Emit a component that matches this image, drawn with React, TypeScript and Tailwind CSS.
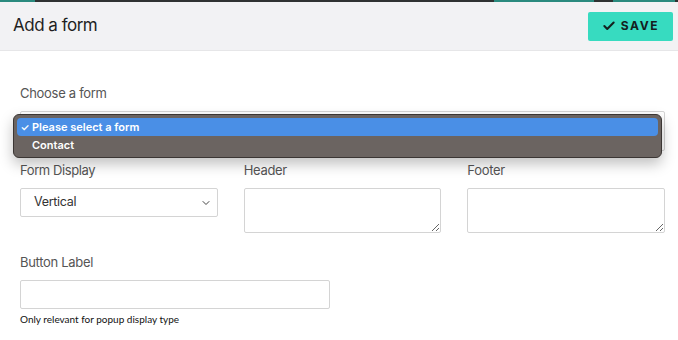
import {Check, ChevronDown} from "lucide-react";

export default function App() {
    return (
        <div className="w-[678px] h-[340px] bg-white overflow-hidden font-[Inter,sans-serif] relative">
            {/* loading strip */}
            <div className="flex h-[2px] bg-[#2f3232]">
                <div className="w-[35px] bg-[#2a8a7e]"/>
                <div className="w-[459px]"/>
                <div className="w-[100px] bg-[#2a8a7e]"/>
                <div className="w-[19px]"/>
                <div className="w-[62px] bg-[#2a8a7e]"/>
            </div>

            <div className="h-[49px] bg-[#f2f2f4] border-b border-[#e6e6e8] flex items-center justify-between pl-[13px] pr-[5px]">
                <h1 className="text-[17px] text-[#1f1f1f] tracking-[-0.5px]">Add a form</h1>
                <button className="h-[29px] w-[85px] rounded-[2px] bg-[#37dbc0] flex items-center justify-center gap-[5px] text-[12px] font-bold tracking-[1.6px] text-[#14201e]">
                    <Check size={14} strokeWidth={3.5}/>
                    SAVE
                </button>
            </div>

            <div className="px-5 pt-[32px]">
                <div className="text-[13px] leading-[20px] text-[#555] tracking-[-0.3px]">Choose a form</div>
                <div className="relative mt-2">
                    <div className="h-[40px] w-[645px] border border-[#d4d4d4] rounded-[2px] bg-white"/>
                    <div className="absolute left-[-7px] top-[3px] w-[649px] h-[44px] rounded-[6px] bg-[#6b6461] border border-[#3b3634] p-[3px] shadow-[0_6px_14px_rgba(0,0,0,0.25)]">
                        <div className="h-[18px] rounded-[4px] bg-[#4a8fe6] flex items-center text-[11px] font-semibold text-white">
                            <span className="w-[14px] text-center text-[10px] ml-[1px]">✓</span>
                            Please select a form
                        </div>
                        <div className="h-[18px] flex items-center pl-[15px] text-[11px] font-semibold text-white">
                            Contact
                        </div>
                    </div>
                </div>

                <div className="grid grid-cols-3 gap-x-[26px] w-[645px] mt-[9px]">
                    <div>
                        <div className="text-[13px] leading-[20px] text-[#555] tracking-[-0.4px]">Form Display</div>
                        <div className="mt-2 h-[29px] border border-[#d4d4d4] rounded-[2px] flex items-center justify-between pl-[13px] pr-[5px] text-[12.5px] tracking-[-0.3px] text-[#333]">
                            Vertical
                            <ChevronDown size={12} strokeWidth={2} className="text-[#444]"/>
                        </div>
                    </div>
                    <div>
                        <div className="text-[13px] leading-[20px] text-[#555] tracking-[-0.3px]">Header</div>
                        <textarea className="mt-2 block w-full h-[45px] border border-[#d4d4d4] rounded-[2px]"/>
                    </div>
                    <div>
                        <div className="text-[13px] leading-[20px] text-[#555] tracking-[-0.3px]">Footer</div>
                        <textarea className="mt-2 block w-full h-[45px] border border-[#d4d4d4] rounded-[2px]"/>
                    </div>
                </div>

                <div className="mt-[19px] text-[13px] leading-[20px] text-[#555] tracking-[-0.3px]">Button Label</div>
                <input className="mt-2 block w-[310px] h-[29px] border border-[#d4d4d4] rounded-[2px]"/>
                <div className="mt-[3px] text-[10px] leading-[14px] text-[#111] font-[Lato,sans-serif]">
                    Only relevant for popup display type
                </div>
            </div>
        </div>
    );
}
